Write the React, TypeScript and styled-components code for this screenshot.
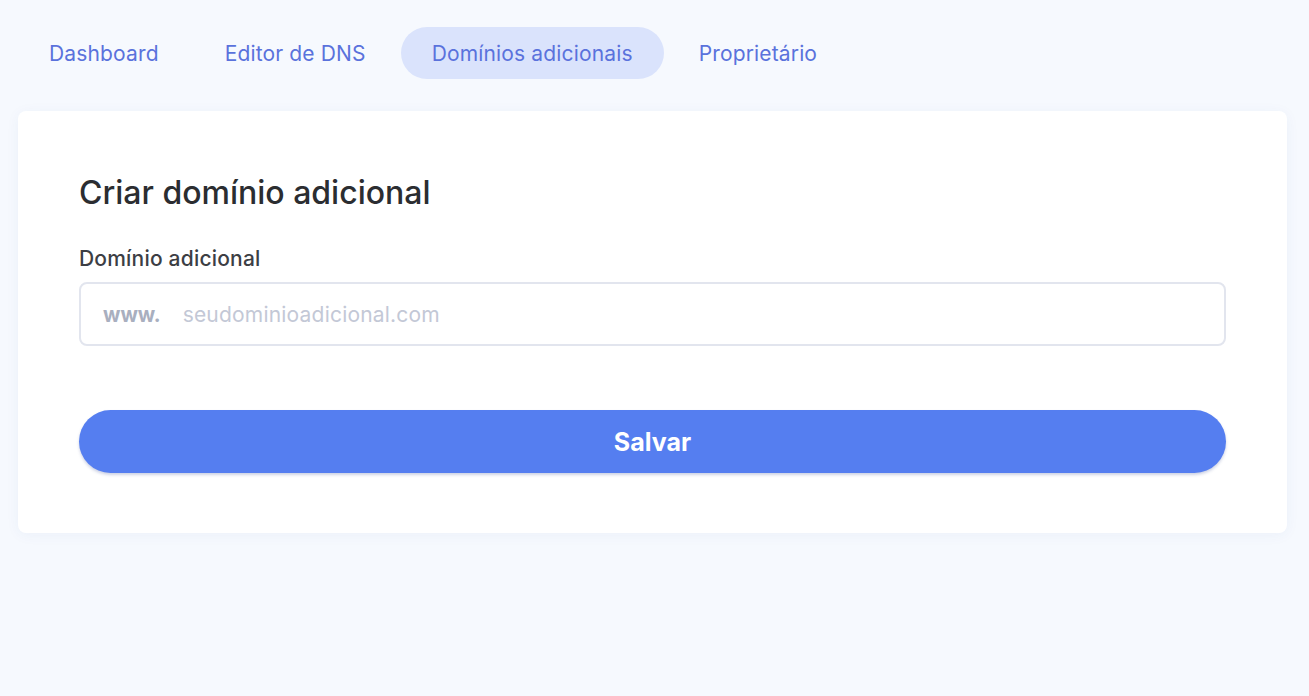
import styled, { createGlobalStyle } from 'styled-components';

const GlobalStyle = createGlobalStyle`
	html, body {
		margin: 0;
		padding: 0;
		background: #f6f9fe;
		font-family: Inter, 'Open Sans', sans-serif;
	}
	* {
		box-sizing: border-box;
	}
`;

const Page = styled.div`
	padding: 27px 22px 0 18px;
	min-height: 696px;
`;

const Tabs = styled.nav`
	display: flex;
	gap: 4px;
	margin-bottom: 32px;
`;

const Tab = styled.a<{ $active?: boolean }>`
	display: flex;
	align-items: center;
	height: 52px;
	padding: 1px 31px 0;
	border-radius: 26px;
	font-size: 21px;
	letter-spacing: 0.15px;
	color: #5a72dc;
	text-decoration: none;
	background: ${(p) => (p.$active ? '#dae3fc' : 'transparent')};
	cursor: pointer;
`;

const Card = styled.section`
	background: #fff;
	border-radius: 8px;
	padding: 60px 61px 60px;
	box-shadow: 0 2px 14px rgba(40, 70, 160, 0.05);
`;

const Title = styled.h2`
	margin: 3px 0 34px;
	font-size: 32px;
	line-height: 38px;
	font-weight: 500;
	color: #2b2d31;
`;

const Label = styled.label`
	display: block;
	margin-bottom: 10px;
	font-size: 21px;
	line-height: 26px;
	font-weight: 500;
	letter-spacing: 0.2px;
	color: #3c3e44;
`;

const InputField = styled.div`
	display: flex;
	align-items: center;
	height: 64px;
	padding: 0 22px;
	border: 2px solid #e2e5ee;
	border-radius: 8px;
	margin-bottom: 64px;

	span {
		font-size: 20.5px;
		font-weight: 700;
		color: #a9afbf;
		margin-right: 20px;
	}

	input {
		flex: 1;
		border: none;
		outline: none;
		background: none;
		font-family: inherit;
		font-size: 21px;
		letter-spacing: 0.2px;
		color: #3c3e44;
	}

	input::placeholder {
		color: #c3c8d6;
	}
`;

const Button = styled.button`
	display: block;
	width: 100%;
	height: 63px;
	border: none;
	border-radius: 32px;
	background: #557ef0;
	color: #fff;
	font-family: inherit;
	font-size: 25px;
	font-weight: 700;
	box-shadow: 0 2px 3px rgba(60, 80, 150, 0.25);
	cursor: pointer;
`;

const tabs = ['Dashboard', 'Editor de DNS', 'Domínios adicionais', 'Proprietário'];

export default function App() {
	return (
		<>
			<GlobalStyle />
			<Page>
				<Tabs>
					{tabs.map((t) => (
						<Tab key={t} $active={t === 'Domínios adicionais'}>
							{t}
						</Tab>
					))}
				</Tabs>
				<Card>
					<Title>Criar domínio adicional</Title>
					<Label htmlFor="dominio">Domínio adicional</Label>
					<InputField>
						<span>www.</span>
						<input id="dominio" type="text" placeholder="seudominioadicional.com" />
					</InputField>
					<Button>Salvar</Button>
				</Card>
			</Page>
		</>
	);
}
